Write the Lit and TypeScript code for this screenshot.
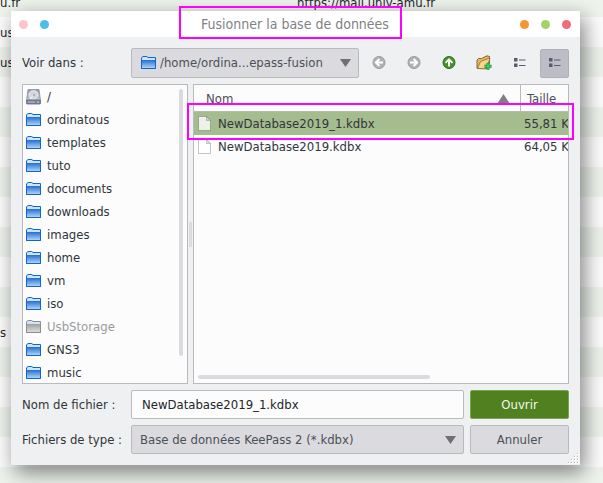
import { LitElement, html, css, svg } from "lit";
import { customElement, property, state } from "lit/decorators.js";
import { classMap } from "lit/directives/class-map.js";

type Place = { name: string; kind: "drive" | "folder" | "offline" };

const PLACES: Place[] = [
  { name: "/", kind: "drive" },
  { name: "ordinatous", kind: "folder" },
  { name: "templates", kind: "folder" },
  { name: "tuto", kind: "folder" },
  { name: "documents", kind: "folder" },
  { name: "downloads", kind: "folder" },
  { name: "images", kind: "folder" },
  { name: "home", kind: "folder" },
  { name: "vm", kind: "folder" },
  { name: "iso", kind: "folder" },
  { name: "UsbStorage", kind: "offline" },
  { name: "GNS3", kind: "folder" },
  { name: "music", kind: "folder" },
];

const FILES = [
  { name: "NewDatabase2019_1.kdbx", size: "55,81 Kio" },
  { name: "NewDatabase2019.kdbx", size: "64,05 Kio" },
];

// Entries of the window behind the dialog, one per stripe.
const ENTRIES: { user: string; url: string }[] = Array.from({ length: 17 }, (_, i) => ({
  user: i === 0 ? "u.fr" : i === 1 || i === 2 ? "us" : i === 11 ? "s" : "",
  url: i === 0 ? "https://mail.univ-amu.fr" : "",
}));

const drive = svg`
  <defs><linearGradient id="d" x2="0" y2="1"><stop stop-color="#8f96a8"/><stop offset="1" stop-color="#c3c8d4"/></linearGradient></defs>
  <path d="M2 .5h11l1.500 11H.5z" fill="url(#d)" stroke="#8b90a2" stroke-width=".8"/>
  <ellipse cx="7.500" cy="5.800" rx="4.600" ry="4.200" fill="#d3d6de" stroke="#eef0f4" stroke-width=".8"/>
  <circle cx="8" cy="6" r="1.200" fill="#a9aebc"/>
  <path d="M4 10l3-3.400" stroke="#f4f5f8" stroke-width="1"/>
  <rect x=".5" y="11" width="14" height="4" rx=".6" fill="#7a8198" stroke="#626981" stroke-width=".8"/>
  <path d="M2 13h7" stroke="#b8bdcc" stroke-width="1.200"/><path d="M11 13h2" stroke="#dfe2ea" stroke-width="1.200"/>`;

const folder = (edge: string, top: string, bottom: string) => svg`
  <defs><linearGradient id="f" x2="0" y2="1"><stop stop-color="${top}"/><stop offset="1" stop-color="${bottom}"/></linearGradient></defs>
  <path d="M.5 3L1.800 1.500h4L7 2.500h7.500v11H.5z" fill="#cfe2f8" stroke="${edge}" stroke-linejoin="round"/>
  <path d="M1 5h13v8H1z" fill="url(#f)"/>
  <path d="M.5 3v10.500h14V3" fill="none" stroke="${edge}" stroke-linejoin="round"/>`;

@customElement("place-icon")
export class PlaceIcon extends LitElement {
  @property() kind: Place["kind"] = "folder";

  static styles = css`
    :host { display: block; width: 16px; height: 16px; }
    .glyph { display: block; width: 16px; height: 16px; }
  `;

  render() {
    const shape =
      this.kind === "drive" ? drive
      : this.kind === "offline" ? folder("#8d8d8d", "#a0a0a0", "#dcdcdc")
      : folder("#0c68cc", "#1f6fd2", "#b0d0f6");
    return html`<svg class="glyph" viewBox="0 0 16 16" aria-hidden="true">${shape}</svg>`;
  }
}

const disc = (fill: string, edge: string, arrow: string) => svg`
  <circle cx="8" cy="7.500" r="6" fill="${fill}" stroke="${edge}" stroke-width="1"/>
  <path d="${arrow}" fill="none" stroke="#fff" stroke-width="2"/>`;

const list = svg`
  <path d="M3 3h3.500v3.500H3zM3 8.500h3.500V12H3z" fill="#5a5d69"/>
  <path d="M8 5h6.500M8 10.500h6.500" stroke="#5a5d69" stroke-width="1.200"/>`;

const TOOLS = [
  { label: "Précédent", on: false, icon: disc("#b2b2b2", "#9a9a9a", "M12 7.500H5M8.400 4L4.900 7.500l3.500 3.500") },
  { label: "Suivant", on: false, icon: disc("#b2b2b2", "#9a9a9a", "M4 7.500h7M7.600 4l3.500 3.500L7.600 11") },
  { label: "Dossier parent", on: false, icon: disc("#43912a", "#2c7018", "M8 11.500v-7M4.500 7.900L8 4.400l3.500 3.500") },
  {
    label: "Nouveau dossier", on: false,
    icon: svg`
      <path d="M1 13.500V5l1.500-1.500h3L6.500 3 11 .8l2.500.7V8l-3 5.700z" fill="#e6b566" stroke="#80571f" stroke-width=".9" stroke-linejoin="round"/>
      <path d="M1.500 13.500L4.500 6.500 7 5.500l7-2.500-2.500 8-1.500 2.700z" fill="#f6d68e" stroke="#93682b" stroke-width=".8" stroke-linejoin="round"/>
      <path d="M12 7.800v7M8.500 11.300h7" stroke="#168a3a" stroke-width="3"/>
      <path d="M12 8.300v6M9 11.300h6" stroke="#35d060" stroke-width="1.600"/>`,
  },
  { label: "Vue en liste", on: false, icon: list },
  { label: "Vue détaillée", on: true, icon: list },
];

@customElement("app-root")
export class AppRoot extends LitElement {
  @state() private selected = 0;

  static styles = css`
    * { box-sizing: border-box; }
    :host {
      display: flex;
      position: relative;
      box-sizing: border-box;
      height: 100vh;
      min-height: 360px;
      padding: 11px 23px 18px 11px;
      overflow: hidden;
      background: #fff;
      color: #31363b;
      font: 13px/16px "DejaVu Sans Condensed", "DejaVu Sans", sans-serif;
    }
    button, input, select { font: inherit; color: inherit; margin: 0; }

    .backdrop { position: absolute; inset: -13px 0 0 0; }
    .entry {
      display: grid;
      grid-template-columns: 297px 1fr;
      height: 30px;
      line-height: 32px;
      white-space: nowrap;
      background: #fdfdfd;
      color: #232629;
    }
    .entry:nth-child(odd) { background: #eff4ed; }

    .dialog {
      position: relative;
      display: flex;
      flex: 1;
      min-width: 0;
      flex-direction: column;
      background: #eff0f2;
      box-shadow: 4px 7px 20px rgba(0, 0, 0, 0.5);
    }
    .titlebar {
      display: flex;
      align-items: center;
      justify-content: space-between;
      height: 26px;
      padding: 0 9px 0 8px;
      background: #fff;
    }
    .dots { display: flex; gap: 12px; width: 52px; }
    .dots.end { justify-content: flex-end; }
    .dot { width: 9px; height: 9px; padding: 0; border: 0; border-radius: 50%; }
    .pink { background: #ffc4cb; }
    .blue { background: #4bbfea; }
    .orange { background: #f79433; }
    .green { background: #a2d568; }
    .red { background: #f26a7a; }
    .title {
      position: relative;
      margin: 0;
      font-size: 14px;
      font-weight: normal;
      color: #7f8285;
      white-space: nowrap;
    }
    .marker {
      position: absolute;
      border: 2px solid #ff00ff;
      pointer-events: none;
      z-index: 2;
    }
    .title .marker { inset: -10px -13px -7px -22px; }
    .files .marker { inset: 18px -6px auto -7px; height: 37px; }

    .content {
      display: flex;
      flex: 1;
      min-height: 0;
      flex-direction: column;
      gap: 6px;
      padding: 11px;
    }
    .toolbar { display: flex; align-items: center; gap: 6px; height: 30px; }
    .label { flex: none; width: 103px; white-space: nowrap; }
    .combo { position: relative; flex: 1; min-width: 0; }
    .combo place-icon { position: absolute; left: 10px; top: 7px; }
    .chooser {
      display: block;
      width: 100%;
      height: 29px;
      padding: 0 26px 0 8px;
      border: 1px solid #b9babc;
      border-radius: 2px;
      appearance: none;
      background: #dadadf;
      color: #4c5057;
    }
    .toolbar .chooser { height: 30px; padding-left: 28px; }
    .caret { position: absolute; right: 8px; top: 11px; width: 11px; height: 8px; pointer-events: none; }
    .tool {
      display: grid;
      place-items: center;
      width: 29px;
      height: 29px;
      padding: 0 1px 0 0;
      border: 1px solid transparent;
      border-radius: 2px;
      background: none;
    }
    .tool.on { background: #bdbdc7; border-color: #b0b0b8; }
    .glyph { display: block; width: 16px; height: 16px; }

    .panes { display: grid; grid-template-columns: 166px 5px 1fr; flex: 1; min-height: 0; }
    .places, .files { position: relative; min-width: 0; border: 1px solid #b9babc; background: #fcfcfc; }
    .places { overflow: hidden; }
    .list { margin: 0; padding: 0; list-style: none; }
    .place {
      display: flex;
      align-items: center;
      gap: 5px;
      width: 100%;
      height: 23px;
      padding: 0 3px;
      border: 0;
      background: none;
      color: #31363b;
    }
    .place:disabled { color: #999b9e; }
    .bar { position: absolute; border-radius: 2px; background: #dadadf; }
    .bar.vertical { top: 4px; right: 4px; bottom: 27px; width: 4px; }
    .bar.horizontal { left: 4px; bottom: 4px; width: 62%; height: 4px; }
    .splitter { align-self: center; justify-self: center; width: 3px; height: 25px; background: #dadadf; }

    .clip { overflow: hidden; }
    .table { width: 100%; table-layout: fixed; border-collapse: separate; border-spacing: 0; }
    .table th {
      height: 27px;
      padding: 1px 0 0 12px;
      border-bottom: 1px solid #b9babc;
      font-weight: normal;
      text-align: left;
      color: #4c5057;
    }
    .table th + th { width: 48px; padding-left: 6px; border-left: 1px solid #b9babc; }
    .table td { height: 23px; padding: 0 0 0 4px; white-space: nowrap; overflow: hidden; }
    .row.on td { background: #a5bc8e; }
    .head { display: flex; align-items: center; justify-content: space-between; padding-right: 10px; }
    .sort { display: block; width: 13px; height: 10px; }
    .file { display: flex; align-items: center; gap: 7px; }
    .sheet { display: block; width: 13px; height: 15px; }

    .form { display: grid; grid-template-columns: 103px 1fr 99px; gap: 6px; align-items: center; }
    .name {
      width: 100%;
      min-width: 0;
      height: 29px;
      padding: 0 10px;
      border: 1px solid #b9babc;
      border-radius: 2px;
      background: #fcfcfc;
      color: #232629;
    }
    .action {
      height: 29px;
      padding: 0;
      border: 1px solid #b9babc;
      border-radius: 2px;
      background: #dadadf;
      color: #4c5057;
    }
    .action.primary { border-color: #7aa64b; background: #508020; color: #f4f7ef; }
    .grip { position: absolute; right: 1px; bottom: 1px; width: 11px; height: 11px; }
  `;

  private caret = html`<svg class="caret" viewBox="0 0 11 8" aria-hidden="true"><path d="M0 0h11L5.500 8z" fill="#6e7076"/></svg>`;

  private renderSheet() {
    return html`<svg class="sheet" viewBox="0 0 13 15" aria-hidden="true">
      <path d="M.5.5h8l4 4v10H.5z" fill="#fff" fill-opacity=".8" stroke="#000" stroke-opacity=".22"/>
      <path d="M8.500.5v4h4" fill="#000" fill-opacity=".12" stroke="#000" stroke-opacity=".18"/>
    </svg>`;
  }

  private renderGrip() {
    const dots = [];
    for (let y = 0; y < 4; y++)
      for (let x = 3 - y; x < 4; x++)
        dots.push(svg`<rect x=${x * 3} y=${y * 3} width="2" height="2" fill="#fff"/><rect x=${x * 3} y=${y * 3} width="1" height="1" fill="#b4b5b8"/>`);
    return html`<svg class="grip" viewBox="0 0 11 11" aria-hidden="true">${dots}</svg>`;
  }

  render() {
    return html`
      <div class="backdrop">
        ${ENTRIES.map((e) => html`<div class="entry"><span>${e.user}</span><span>${e.url}</span></div>`)}
      </div>
      <section class="dialog" role="dialog" aria-labelledby="title">
        <header class="titlebar">
          <div class="dots">
            <button class="dot pink" aria-label="Menu"></button>
            <button class="dot blue" aria-label="Épingler"></button>
          </div>
          <h1 class="title" id="title">Fusionner la base de données<span class="marker"></span></h1>
          <div class="dots end">
            <button class="dot orange" aria-label="Réduire"></button>
            <button class="dot green" aria-label="Agrandir"></button>
            <button class="dot red" aria-label="Fermer"></button>
          </div>
        </header>
        <div class="content">
          <div class="toolbar">
            <label class="label" for="folder">Voir dans :</label>
            <div class="combo">
              <select class="chooser" id="folder"><option>/home/ordina...epass-fusion</option></select>
              <place-icon></place-icon>
              ${this.caret}
            </div>
            ${TOOLS.map((t) => html`
              <button class=${classMap({ tool: true, on: t.on })} aria-label=${t.label}>
                <svg class="glyph" viewBox="0 0 16 16" aria-hidden="true">${t.icon}</svg>
              </button>`)}
          </div>
          <div class="panes">
            <nav class="places">
              <ul class="list">
                ${PLACES.map((p) => html`
                  <li><button class="place" ?disabled=${p.kind === "offline"}>
                    <place-icon .kind=${p.kind}></place-icon>${p.name}
                  </button></li>`)}
              </ul>
              <div class="bar vertical"></div>
            </nav>
            <div class="splitter"></div>
            <div class="files">
              <div class="clip">
                <table class="table">
                  <thead>
                    <tr>
                      <th><div class="head">Nom
                        <svg class="sort" viewBox="0 0 13 10" aria-hidden="true"><path d="M6.500 0L13 10H0z" fill="#7d7f83"/></svg>
                      </div></th>
                      <th>Taille</th>
                    </tr>
                  </thead>
                  <tbody>
                    ${FILES.map((f, i) => html`
                      <tr class=${classMap({ row: true, on: i === this.selected })} @click=${() => (this.selected = i)}>
                        <td><div class="file">${this.renderSheet()}${f.name}</div></td>
                        <td>${f.size}</td>
                      </tr>`)}
                  </tbody>
                </table>
              </div>
              <div class="bar horizontal"></div>
              <span class="marker"></span>
            </div>
          </div>
          <div class="form">
            <label class="label" for="name">Nom de fichier :</label>
            <input class="name" id="name" type="text" .value=${FILES[this.selected].name} />
            <button class="action primary">Ouvrir</button>
            <label class="label" for="type">Fichiers de type :</label>
            <div class="combo">
              <select class="chooser" id="type"><option>Base de données KeePass 2 (*.kdbx)</option></select>
              ${this.caret}
            </div>
            <button class="action">Annuler</button>
          </div>
        </div>
        ${this.renderGrip()}
      </section>
    `;
  }
}
